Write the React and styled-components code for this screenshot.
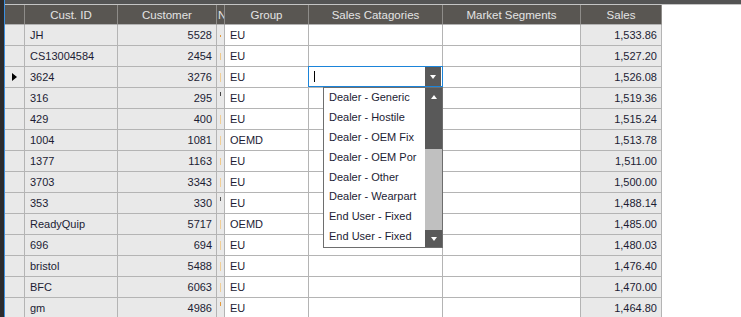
import React from 'react';
import styled, { createGlobalStyle } from 'styled-components';

const GlobalStyle = createGlobalStyle`
  html, body { margin: 0; padding: 0; background: #ffffff; overflow: hidden; }
  body { font-family: "Liberation Sans", Arial, sans-serif; }
`;

const COLS = '20px 93px 99px 8px 84px 134px 138px 81px';

const rows = [
  { id: 'JH', cust: '5528', group: 'EU', sales: '1,533.86', mark: 'dot', tone: '#e39a3c' },
  { id: 'CS13004584', cust: '2454', group: 'EU', sales: '1,527.20', mark: 'colon', tone: '#f0c98a' },
  { id: '3624', cust: '3276', group: 'EU', sales: '1,526.08', mark: 'bar', tone: '#f2cf96', current: true },
  { id: '316', cust: '295', group: 'EU', sales: '1,519.36', mark: 'tick', tone: '#444444' },
  { id: '429', cust: '400', group: 'EU', sales: '1,515.24', mark: 'bar', tone: '#f2cf96' },
  { id: '1004', cust: '1081', group: 'OEMD', sales: '1,513.78', mark: 'bar', tone: '#f2cf96' },
  { id: '1377', cust: '1163', group: 'EU', sales: '1,511.00', mark: 'colon', tone: '#f0c98a' },
  { id: '3703', cust: '3343', group: 'EU', sales: '1,500.00', mark: 'bar', tone: '#f2cf96' },
  { id: '353', cust: '330', group: 'EU', sales: '1,488.14', mark: 'tick', tone: '#555555' },
  { id: 'ReadyQuip', cust: '5717', group: 'OEMD', sales: '1,485.00', mark: 'bar', tone: '#f2cf96' },
  { id: '696', cust: '694', group: 'EU', sales: '1,480.03', mark: 'bar', tone: '#f2cf96' },
  { id: 'bristol', cust: '5488', group: 'EU', sales: '1,476.40', mark: 'bar', tone: '#f2cf96' },
  { id: 'BFC', cust: '6063', group: 'EU', sales: '1,470.00', mark: 'bar', tone: '#f2cf96' },
  { id: 'gm', cust: '4986', group: 'EU', sales: '1,464.80', mark: 'tick', tone: '#e39a3c' },
];

const options = [
  'Dealer - Generic',
  'Dealer - Hostile',
  'Dealer - OEM Fix',
  'Dealer - OEM Por',
  'Dealer - Other',
  'Dealer - Wearpart',
  'End User - Fixed',
  'End User - Fixed',
];

const Page = styled.div`
  width: 741px;
  height: 317px;
  display: flex;
  flex-direction: column;
  background: #ffffff;
`;

const TopBar = styled.div`
  height: 4px;
  flex: none;
  background: #545454;
  border-bottom: 1px solid #c4c4c4;
`;

const Body = styled.div`
  flex: 1;
  display: flex;
  min-height: 0;
`;

const LeftEdge = styled.div`
  width: 4px;
  flex: none;
  background: #2b2b2d;
  border-right: 1px solid #3b8fe0;
  margin-top: -5px;
`;

const Grid = styled.div`
  display: grid;
  grid-template-columns: ${COLS};
  grid-auto-rows: 21px;
  grid-template-rows: 20px;
  align-self: flex-start;
  font-size: 11px;
  color: #1c1c34;
`;

const HeadCell = styled.div`
  background: #595652;
  color: #e4e4e4;
  font-size: 11.5px;
  display: flex;
  align-items: center;
  justify-content: ${p => (p.$left ? 'flex-start' : 'center')};
  padding-left: ${p => (p.$left ? '1px' : '0')};
  border-right: 1px solid #8e8c89;
  border-bottom: 1px solid #b2b2b2;
  box-sizing: border-box;
  overflow: hidden;
  white-space: nowrap;
`;

const Cell = styled.div`
  position: relative;
  box-sizing: border-box;
  background: ${p => (p.$ro ? '#e9e9e9' : '#ffffff')};
  border-right: 1px solid #b4b4b4;
  border-bottom: 1px solid #b4b4b4;
  display: flex;
  align-items: center;
  justify-content: ${p => (p.$right ? 'flex-end' : 'flex-start')};
  padding: ${p => (p.$right ? '0 4px 0 0' : '0 0 0 5px')};
  white-space: nowrap;
  overflow: ${p => (p.$open ? 'visible' : 'hidden')};
  z-index: ${p => (p.$open ? 2 : 'auto')};
`;

const MarkCell = styled(Cell)`
  padding: 0;
  justify-content: center;
`;

const Mark = styled.span`
  display: block;
  width: 1px;
  background: ${p => p.$tone};
  height: ${p => ({ dot: '2px', colon: '7px', bar: '9px', tick: '4px' }[p.$kind])};
  margin-top: ${p => ({ dot: '2px', colon: '0', bar: '0', tick: '-8px' }[p.$kind])};
`;

const Pointer = styled.span`
  width: 0;
  height: 0;
  margin-left: 2px;
  border-top: 4px solid transparent;
  border-bottom: 4px solid transparent;
  border-left: 5px solid #000000;
`;

const Editor = styled.div`
  position: absolute;
  inset: -1px -1px 0 -1px;
  border: 1px solid #1b84d9;
  background: #ffffff;
  display: flex;
  align-items: center;
  justify-content: space-between;
  padding-left: 5px;
`;

const Caret = styled.span`
  width: 1px;
  height: 11px;
  background: #000000;
`;

const ArrowButton = styled.div`
  width: 16px;
  height: 19px;
  background: #595959;
  display: flex;
  align-items: center;
  justify-content: center;
  margin-right: 1px;
`;

const Triangle = styled.span`
  width: 0;
  height: 0;
  border-left: 3.5px solid transparent;
  border-right: 3.5px solid transparent;
  ${p => (p.$up ? 'border-bottom: 4px solid #ffffff;' : 'border-top: 4px solid #ffffff;')}
`;

const DropList = styled.div`
  position: absolute;
  top: 20px;
  left: 14px;
  width: 120px;
  height: 161px;
  box-sizing: border-box;
  border: 1px solid #6e6e6e;
  background: #ffffff;
  display: flex;
  z-index: 3;
`;

const Options = styled.div`
  flex: 1;
  display: flex;
  flex-direction: column;
  overflow: hidden;
`;

const Option = styled.div`
  height: 19.9px;
  line-height: 19.9px;
  padding-left: 5px;
  font-size: 11px;
  color: #1c1c34;
  white-space: nowrap;
`;

const ScrollBar = styled.div`
  width: 17px;
  display: flex;
  flex-direction: column;
  background: #c0c0c0;
`;

const ScrollButton = styled.div`
  height: 17px;
  background: #595959;
  display: flex;
  align-items: center;
  justify-content: center;
`;

const Thumb = styled.div`
  height: 44px;
  background: #595959;
`;

const Track = styled.div`
  flex: 1;
`;

const headers = ['', 'Cust. ID', 'Customer', 'N', 'Group', 'Sales Catagories', 'Market Segments', 'Sales'];

const App = () => (
  <Page>
    <GlobalStyle />
    <TopBar />
    <Body>
      <LeftEdge />
      <Grid>
        {headers.map((h, i) => (
          <HeadCell key={i} $left={h === 'N'}>{h}</HeadCell>
        ))}
        {rows.map((r, i) => (
          <React.Fragment key={i}>
            <Cell $ro>{r.current && <Pointer />}</Cell>
            <Cell $ro>{r.id}</Cell>
            <Cell $ro $right>{r.cust}</Cell>
            <MarkCell $ro><Mark $kind={r.mark} $tone={r.tone} /></MarkCell>
            <Cell>{r.group}</Cell>
            <Cell $open={r.current}>
              {r.current && (
                <>
                  <Editor>
                    <Caret />
                    <ArrowButton><Triangle /></ArrowButton>
                  </Editor>
                  <DropList>
                    <Options>
                      {options.map((o, k) => (
                        <Option key={k}>{o}</Option>
                      ))}
                    </Options>
                    <ScrollBar>
                      <ScrollButton><Triangle $up /></ScrollButton>
                      <Thumb />
                      <Track />
                      <ScrollButton><Triangle /></ScrollButton>
                    </ScrollBar>
                  </DropList>
                </>
              )}
            </Cell>
            <Cell />
            <Cell $ro $right>{r.sales}</Cell>
          </React.Fragment>
        ))}
      </Grid>
    </Body>
  </Page>
);

export default App;
